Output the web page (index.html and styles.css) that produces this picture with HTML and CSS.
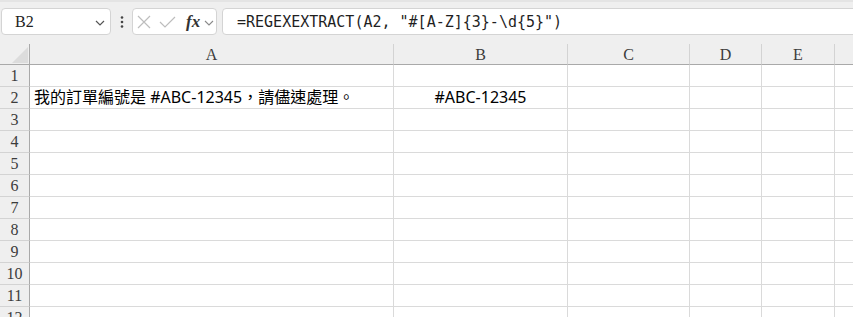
FILE: index.html
```html
<!DOCTYPE html>
<html lang="zh-Hant">
<head>
    <meta charset="UTF-8">
    <title>REGEXEXTRACT</title>
    <link rel="stylesheet" href="styles.css">
</head>
<body>
    <div class="toolbar">
        <div class="name-box">
            <span class="cell-ref">B2</span>
            <svg class="chevron" width="10" height="6" viewBox="0 0 10 6"><path d="M1 1 L5 5 L9 1" fill="none" stroke="#555" stroke-width="1.2"/></svg>
        </div>
        <div class="dots">
            <svg width="4" height="12" viewBox="0 0 4 12"><circle cx="2" cy="1.5" r="1.3" fill="#444"/><circle cx="2" cy="6" r="1.3" fill="#444"/><circle cx="2" cy="10.5" r="1.3" fill="#444"/></svg>
        </div>
        <div class="fx-box">
            <svg class="icon-x" width="14" height="14" viewBox="0 0 14 14"><path d="M1 1 L13 13 M13 1 L1 13" fill="none" stroke="#bdbdbd" stroke-width="1.2"/></svg>
            <svg class="icon-ok" width="17" height="12" viewBox="0 0 17 12"><path d="M1 6 L6 11 L16 1" fill="none" stroke="#bdbdbd" stroke-width="1.2"/></svg>
            <span class="fx">fx</span>
            <svg class="chevron-sm" width="10" height="6" viewBox="0 0 10 6"><path d="M1 1 L5 5 L9 1" fill="none" stroke="#8a8a8a" stroke-width="1.1"/></svg>
        </div>
        <div class="formula">=REGEXEXTRACT(A2, "#[A-Z]{3}-\d{5}")</div>
    </div>

    <div class="header-gap"></div>

    <div class="sheet">
        <div class="corner">
            <svg width="16" height="16" viewBox="0 0 16 16"><polygon points="16,0 16,16 0,16" fill="#dcdcdc"/></svg>
        </div>
        <div class="col-head">A</div>
        <div class="col-head">B</div>
        <div class="col-head">C</div>
        <div class="col-head">D</div>
        <div class="col-head">E</div>
        <div class="col-head last"></div>

        <div class="row-head">1</div>
        <div class="cell"></div><div class="cell"></div><div class="cell"></div><div class="cell"></div><div class="cell"></div><div class="cell last"></div>

        <div class="row-head">2</div>
        <div class="cell text">我的訂單編號是 #ABC-12345，請儘速處理。</div>
        <div class="cell center">#ABC-12345</div>
        <div class="cell"></div><div class="cell"></div><div class="cell"></div><div class="cell last"></div>

        <div class="row-head">3</div>
        <div class="cell"></div><div class="cell"></div><div class="cell"></div><div class="cell"></div><div class="cell"></div><div class="cell last"></div>
        <div class="row-head">4</div>
        <div class="cell"></div><div class="cell"></div><div class="cell"></div><div class="cell"></div><div class="cell"></div><div class="cell last"></div>
        <div class="row-head">5</div>
        <div class="cell"></div><div class="cell"></div><div class="cell"></div><div class="cell"></div><div class="cell"></div><div class="cell last"></div>
        <div class="row-head">6</div>
        <div class="cell"></div><div class="cell"></div><div class="cell"></div><div class="cell"></div><div class="cell"></div><div class="cell last"></div>
        <div class="row-head">7</div>
        <div class="cell"></div><div class="cell"></div><div class="cell"></div><div class="cell"></div><div class="cell"></div><div class="cell last"></div>
        <div class="row-head">8</div>
        <div class="cell"></div><div class="cell"></div><div class="cell"></div><div class="cell"></div><div class="cell"></div><div class="cell last"></div>
        <div class="row-head">9</div>
        <div class="cell"></div><div class="cell"></div><div class="cell"></div><div class="cell"></div><div class="cell"></div><div class="cell last"></div>
        <div class="row-head">10</div>
        <div class="cell"></div><div class="cell"></div><div class="cell"></div><div class="cell"></div><div class="cell"></div><div class="cell last"></div>
        <div class="row-head">11</div>
        <div class="cell"></div><div class="cell"></div><div class="cell"></div><div class="cell"></div><div class="cell"></div><div class="cell last"></div>
        <div class="row-head">12</div>
        <div class="cell"></div><div class="cell"></div><div class="cell"></div><div class="cell"></div><div class="cell"></div><div class="cell last"></div>
    </div>
</body>
</html>
```

FILE: styles.css
```css
:root {
    --chrome-bg: #efefef;
    --box-border: #d4d4d4;
    --grid-line: #dadada;
    --head-line: #a9a9a9;
    --head-text: #3c3c3c;
}

html, body {
    margin: 0;
    height: 100%;
    overflow: hidden;
    background: #ffffff;
}

body {
    font-family: "Noto Sans", "Noto Sans CJK TC", sans-serif;
}

/* formula bar */
.toolbar {
    display: flex;
    align-items: stretch;
    height: 27px;
    padding: 6px 0 1px 1px;
    background: var(--chrome-bg);
    border-top: 2px solid #e4e4e4;
}

.name-box {
    width: 110px;
    box-sizing: border-box;
    display: flex;
    align-items: center;
    justify-content: space-between;
    padding: 0 5px 0 13px;
    background: #fff;
    border: 1px solid var(--box-border);
    border-radius: 4px;
}

.cell-ref {
    font-family: "Liberation Serif", serif;
    font-size: 16px;
    color: #222;
    padding-top: 1px;
}

.chevron { margin-top: 2px; }

.dots {
    width: 21px;
    display: flex;
    align-items: center;
    justify-content: center;
}

.fx-box {
    width: 85px;
    box-sizing: border-box;
    display: flex;
    align-items: center;
    padding-left: 4px;
    background: #fff;
    border: 1px solid var(--box-border);
    border-radius: 4px;
}

.icon-ok { margin-left: 8px; margin-top: 1px; }

.fx {
    margin-left: 10px;
    font-family: "Liberation Serif", serif;
    font-style: italic;
    font-weight: bold;
    font-size: 17px;
    color: #333;
    width: 14px;
    line-height: 1;
}

.chevron-sm { margin-left: 4px; margin-top: 2px; }

.formula {
    flex: 1;
    margin-left: 5px;
    margin-right: -10px;
    display: flex;
    align-items: center;
    padding-left: 14px;
    background: #fff;
    border: 1px solid var(--box-border);
    border-radius: 4px;
    font-family: "DejaVu Sans Mono", monospace;
    font-size: 15px;
    color: #1f1f1f;
    white-space: pre;
}

.header-gap {
    height: 8px;
    background: var(--chrome-bg);
}

/* grid */
.sheet {
    display: grid;
    grid-template-columns: 30px 364px 174px 122px 72px 73px 1fr;
    grid-auto-rows: 22px;
    grid-template-rows: 21px;
}

.corner {
    background: var(--chrome-bg);
    border-right: 1px solid var(--head-line);
    border-bottom: 1px solid var(--head-line);
    display: flex;
    align-items: flex-end;
    justify-content: flex-end;
    padding: 0 1px 1px 0;
}

.col-head {
    background: var(--chrome-bg);
    border-right: 1px solid #d3d3d3;
    border-bottom: 1px solid var(--head-line);
    text-align: center;
    font-family: "Liberation Serif", serif;
    font-size: 16px;
    line-height: 21px;
    color: var(--head-text);
}

.row-head {
    background: var(--chrome-bg);
    border-right: 1px solid var(--head-line);
    border-bottom: 1px solid #d3d3d3;
    text-align: center;
    font-family: "Liberation Serif", serif;
    font-size: 16px;
    line-height: 22px;
    color: var(--head-text);
}

.cell {
    border-right: 1px solid var(--grid-line);
    border-bottom: 1px solid var(--grid-line);
    font-size: 16px;
    line-height: 21px;
    color: #000;
    white-space: nowrap;
}

.cell.last, .col-head.last { border-right: none; }

.cell.text { padding-left: 4px; overflow: visible; }

.cell.center { text-align: center; }
```
